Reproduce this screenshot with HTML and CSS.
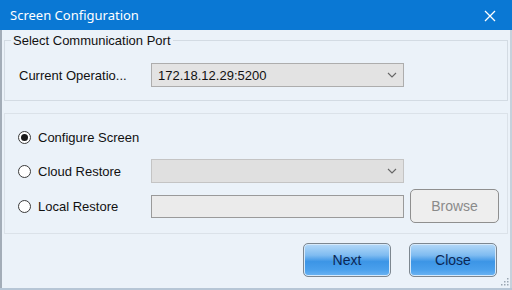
FILE: index.html
```html
<!DOCTYPE html>
<html>
<head>
<meta charset="utf-8">
<link rel="stylesheet" href="styles.css">
</head>
<body>
<div class="window">
  <div class="titlebar">
    <span class="title">Screen Configuration</span>
    <svg class="close-x" width="12" height="12" viewBox="0 0 12 12"><path d="M1 1 L11 11 M11 1 L1 11" stroke="#fff" stroke-width="1.3" fill="none"/></svg>
  </div>
  <div class="body">
    <fieldset class="group">
      <legend>Select Communication Port</legend>
      <div class="port-row">
        <span class="port-label">Current Operatio...</span>
        <div class="combo">
          <span class="combo-text">172.18.12.29:5200</span>
          <svg class="chev" width="10" height="6" viewBox="0 0 10 6"><path d="M1 1 L5 5 L9 1" stroke="#666" stroke-width="1.1" fill="none"/></svg>
        </div>
      </div>
    </fieldset>
    <div class="panel">
      <div class="opt-row">
        <span class="radio checked"></span><span class="opt-label">Configure Screen</span>
      </div>
      <div class="opt-row">
        <span class="radio"></span><span class="opt-label">Cloud Restore</span>
        <div class="combo disabled">
          <span class="combo-text"></span>
          <svg class="chev" width="10" height="6" viewBox="0 0 10 6"><path d="M1 1 L5 5 L9 1" stroke="#666" stroke-width="1.1" fill="none"/></svg>
        </div>
      </div>
      <div class="opt-row last">
        <span class="radio"></span><span class="opt-label">Local Restore</span>
        <div class="textbox"></div>
        <div class="btn-browse">Browse</div>
      </div>
    </div>
    <div class="footer">
      <div class="btn-blue">Next</div>
      <div class="btn-blue">Close</div>
    </div>
  </div>
  <svg class="grip" width="8" height="8" viewBox="0 0 8 8"><g fill="#9aa6b2"><rect x="6" y="0" width="1.5" height="1.5"/><rect x="3" y="3" width="1.5" height="1.5"/><rect x="6" y="3" width="1.5" height="1.5"/><rect x="0" y="6" width="1.5" height="1.5"/><rect x="3" y="6" width="1.5" height="1.5"/><rect x="6" y="6" width="1.5" height="1.5"/></g></svg>
</div>
</body>
</html>
```
FILE: styles.css
```css
* { box-sizing: border-box; }
html, body { margin: 0; padding: 0; }
body {
  width: 512px;
  height: 290px;
  overflow: hidden;
  font-family: "Liberation Sans", Arial, sans-serif;
  font-size: 13px;
  color: #111;
  background: #ebf2f9;
}
.window {
  position: relative;
  width: 512px;
  height: 290px;
  display: flex;
  flex-direction: column;
  background: #ebf2f9;
  border-bottom: 2px solid #b6c6d6;
}
.titlebar {
  height: 30px;
  flex: none;
  background: #0a78d4;
  display: flex;
  align-items: center;
  justify-content: space-between;
  padding: 0 16px 0 10px;
}
.title {
  font-family: "Noto Sans", "Open Sans", sans-serif;
  font-size: 13px;
  color: #fff;
}
.close-x { display: block; margin-top: 1px; }
.body {
  flex: 1;
  display: flex;
  flex-direction: column;
  padding: 0;
  border-left: 2px solid #a3adb8;
  border-right: 2px solid #c5d1dc;
  margin: 0;
}
.group {
  margin: 3px 0 0 2px;
  padding: 15px 0 13px 14px;
  border: 1px solid #d3dbe3;
  border-radius: 0;
  min-width: 0;
  width: 504px;
}
.group legend {
  padding: 0 2px;
  margin-left: -8px;
  font-size: 13px;
  line-height: 15px;
  color: #111;
}
.port-row {
  display: flex;
  align-items: center;
  height: 24px;
}
.port-label {
  width: 132px;
  flex: none;
}
.combo {
  width: 253px;
  height: 24px;
  border: 1px solid #adadad;
  background: #e3e3e3;
  display: flex;
  align-items: center;
  justify-content: space-between;
  padding: 0 6px 0 6px;
}
.combo.disabled { background: #e0e0e0; border-color: #c4c4c4; }
.chev { display: block; }
.panel {
  margin: 12px 0 0 2px;
  width: 504px;
  border: 1px solid #dbe2e9;
  padding: 6px 0 9px 13px;
  display: flex;
  flex-direction: column;
}
.opt-row {
  height: 34px;
  display: flex;
  align-items: center;
}
.opt-row.last { height: 36px; }
.radio {
  width: 13px;
  height: 13px;
  border: 1px solid #3a3a3a;
  border-radius: 50%;
  background: #fff;
  flex: none;
  display: flex;
  align-items: center;
  justify-content: center;
}
.radio.checked::after {
  content: "";
  width: 7px;
  height: 7px;
  border-radius: 50%;
  background: #1a1a1a;
}
.opt-label {
  margin-left: 7px;
  width: 113px;
  flex: none;
}
.textbox {
  width: 253px;
  height: 23px;
  border: 1px solid #9a9a9a;
  background: #ebebeb;
}
.btn-browse {
  margin-left: 6px;
  width: 89px;
  height: 34px;
  border: 1px solid #8f8f8f;
  border-radius: 5px;
  background: #eeeeee;
  color: #8a8a8a;
  font-size: 14px;
  display: flex;
  align-items: center;
  justify-content: center;
}
.footer {
  display: flex;
  justify-content: flex-end;
  gap: 18px;
  padding: 9px 13px 0 0;
}
.btn-blue {
  width: 88px;
  height: 34px;
  border: 1px solid #7d8790;
  border-radius: 5px;
  box-shadow: inset 0 0 0 1px #d6e9fa;
  background: linear-gradient(to bottom, #b5d9f8 0%, #7fbcf1 35%, #3c95e6 55%, #4aa0ec 80%, #6cb4f2 100%);
  color: #0b2754;
  font-size: 14px;
  display: flex;
  align-items: center;
  justify-content: center;
}
.grip {
  position: absolute;
  right: 3px;
  bottom: 2px;
}
```
